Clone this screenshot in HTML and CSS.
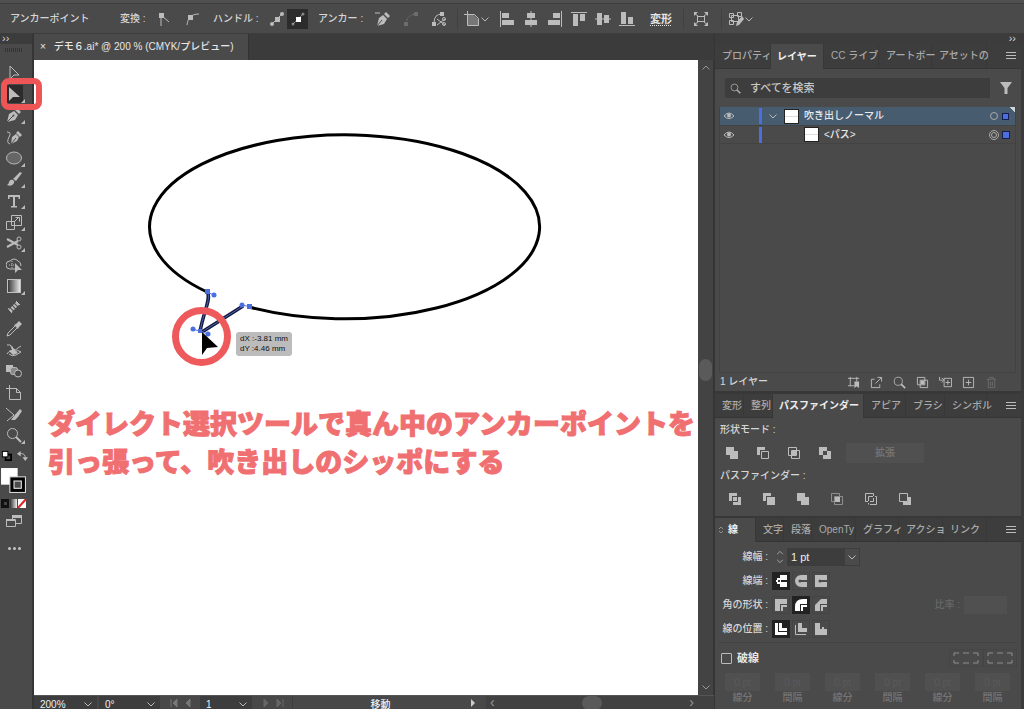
FILE: index.html
```html
<!DOCTYPE html>
<html lang="ja">
<head>
<meta charset="utf-8">
<meta name="viewport" content="width=device-width, initial-scale=1">
<title>デモ６.ai</title>
<link rel="stylesheet" href="styles.css">
</head>
<body>
<svg class="sprite" aria-hidden="true">
  <defs><linearGradient id="fade"><stop offset="0" stop-color="#333"/><stop offset="1" stop-color="#eee"/></linearGradient></defs>
  <symbol id="corner" viewBox="0 0 16 16"><path d="M5 3V15M5 4L13 11" class="ln"/><rect x="3" y="2" width="5" height="5" class="fl"/></symbol>
  <symbol id="smooth" viewBox="0 0 16 16"><path d="M3 14C4 7 7 3 15 3" class="ln"/><rect x="4" y="4" width="5" height="5" class="fl"/></symbol>
  <symbol id="handle" viewBox="0 0 16 16"><path d="M3 13L13 3" class="ln"/><circle cx="3" cy="13" r="2" class="fl"/><circle cx="13" cy="3" r="2" class="fl"/><rect x="6" y="6" width="5" height="5" class="fl"/></symbol>
  <symbol id="handle-on" viewBox="0 0 16 16"><path d="M3 13L13 3" class="ln dimmed"/><circle cx="3" cy="13" r="1.5" class="fl dimmed"/><circle cx="13" cy="3" r="1.5" class="fl dimmed"/><rect x="6" y="6" width="5" height="5" fill="#fff"/></symbol>
  <symbol id="pen" viewBox="0 0 16 16"><path d="M1 15L3 7L8 4L12 8L9 13ZM9 3L11 1L15 5L13 7Z" class="fl"/><path d="M1 15L7 9" stroke="#4a4a4a"/><circle cx="7.500" cy="8.500" r="1" fill="#4a4a4a"/></symbol>
  <symbol id="pen-minus" viewBox="0 0 16 16"><path d="M2 15L4 7L8 4L12 8L9 13ZM9 3L11 1L15 5L13 7Z" class="fl"/><path d="M2 15L7 9" stroke="#4a4a4a"/><path d="M0 2H5" class="ln"/></symbol>
  <symbol id="curve" viewBox="0 0 16 16"><path d="M3 14Q3 4 13 3" class="ln" stroke-dasharray="3 1"/><rect x="1" y="11" width="4" height="4" class="fl"/><rect x="11" y="1" width="4" height="4" class="fl"/></symbol>
  <symbol id="cut" viewBox="0 0 16 16"><path d="M3 12Q3 3 11 3M6 8L14 14M14 8L6 14" class="ln"/><rect x="1" y="11" width="4" height="4" class="fl"/><rect x="9" y="1" width="4" height="4" class="fl"/><circle cx="13" cy="13" r="1.500" class="ln"/><circle cx="13" cy="8" r="1.500" class="ln"/></symbol>
  <symbol id="artboard" viewBox="0 0 16 16"><path d="M0 3.500H4M3.500 0V14.500H14.500V7.500L10.500 3.500H3.500ZM10.500 3.500V7.500H14.500" class="ln"/></symbol>
  <symbol id="artboard-fill" viewBox="0 0 16 16"><path d="M4 4H10L14 8V14H4Z" fill="#777"/><path d="M0 3.500H4M3.500 0V14.500H14.500V7.500L10.500 3.500H3.500Z" class="ln"/></symbol>
  <symbol id="al" viewBox="0 0 16 16"><path d="M1.500 0V16" class="ln"/><path d="M3 2H10V7H3ZM3 9H15V14H3Z" class="fl"/></symbol>
  <symbol id="ac" viewBox="0 0 16 16"><path d="M8 0V16" class="ln"/><path d="M4 2H12V7H4ZM2 9H14V14H2Z" class="fl"/></symbol>
  <symbol id="ar" viewBox="0 0 16 16"><path d="M14.500 0V16" class="ln"/><path d="M6 2H13V7H6ZM1 9H13V14H1Z" class="fl"/></symbol>
  <symbol id="at" viewBox="0 0 16 16"><path d="M0 1.500H16" class="ln"/><path d="M2 3H7V15H2ZM9 3H14V10H9Z" class="fl"/></symbol>
  <symbol id="am" viewBox="0 0 16 16"><path d="M0 8H16" class="ln"/><path d="M2 2H7V14H2ZM9 4H14V12H9Z" class="fl"/></symbol>
  <symbol id="ab" viewBox="0 0 16 16"><path d="M0 14.500H16" class="ln"/><path d="M2 1H7V13H2ZM9 6H14V13H9Z" class="fl"/></symbol>
  <symbol id="isolate" viewBox="0 0 16 16"><rect x="4.500" y="5.500" width="7" height="5" class="ln"/><path d="M1 2L5 5M15 2L11 5M1 14L5 11M15 14L11 11" class="ln"/><path d="M1 1H5L1 5ZM15 1V5L11 1ZM1 15V11L5 15ZM15 15H11L15 11Z" class="fl"/></symbol>
  <symbol id="recolor" viewBox="0 0 16 16"><path d="M3.500 4.500H10.500V10.500H3.500ZM1.500 2.500H5.500V6.500H1.500ZM1.500 9.500H5.500V13.500H1.500ZM9.500 1.500H13.500V5.500H9.500Z" class="ln"/><path d="M8 15L9 11L14 5L16 8L11 14Z" class="fl"/></symbol>
  <symbol id="chev" viewBox="0 0 10 10"><path d="M1.500 3.500L5 7L8.500 3.500" class="ln"/></symbol>
  <symbol id="arrow" viewBox="0 0 16 16"><path d="M4 1V14L8 10H13Z" class="ln"/></symbol>
  <symbol id="arrow-fill" viewBox="0 0 16 16"><path d="M3 1V15L7 11H14Z" class="fl"/></symbol>
  <symbol id="curvature" viewBox="0 0 16 16"><path d="M5 15L6 8L10 5L13 8L11 12ZM10 4L12 2L16 6L14 8Z" class="fl"/><path d="M1 3Q6 3 3 8Q0 14 4 15" class="ln"/><path d="M5 15L10 9" stroke="#4a4a4a"/></symbol>
  <symbol id="oval" viewBox="0 0 16 16"><ellipse cx="8" cy="8" rx="7.500" ry="6" fill="#666" stroke="#b8b8b8"/></symbol>
  <symbol id="brush" viewBox="0 0 16 16"><path d="M7 8L14 1L16 2L10 10ZM1 14Q3 13 3 11Q4 8 7 9Q9 10 8 12Q6 16 1 14Z" class="fl"/></symbol>
  <symbol id="type" viewBox="0 0 16 16"><path d="M2 2H14V6H12.500V4H9V13H11V14.500H5V13H7V4H3.500V6H2Z" class="fl"/></symbol>
  <symbol id="scale" viewBox="0 0 16 16"><path d="M5.500 1.500H15.500V11.500H5.500ZM0.500 7.500H8.500V15.500H0.500ZM8 8L13 3M9.500 3.500H13.500V7.500" class="ln"/></symbol>
  <symbol id="scissors" viewBox="0 0 16 16"><path d="M1 4L12 10M1 12L12 6" stroke="#bcbcbc" stroke-width="2" fill="none"/><circle cx="13" cy="4" r="2" class="ln"/><circle cx="13" cy="12" r="2" class="ln"/></symbol>
  <symbol id="builder" viewBox="0 0 16 16"><path d="M9 12H4A4 4 0 0 1 4 4Q8 0 12 4Q15 5 15 9" class="ln"/><path d="M3 8H11M6 4V11" class="ln" stroke-dasharray="1 1"/><path d="M9 6V16L12 13H16Z" class="fl"/></symbol>
  <symbol id="gradient" viewBox="0 0 16 16"><rect x="1.500" y="1.500" width="13" height="13" fill="url(#fade)" stroke="#c0c0c0"/></symbol>
  <symbol id="measure" viewBox="0 0 16 16"><path d="M2 9L6 14M10 2L14 6" class="ln"/><path d="M4 12L12 4" stroke="#bcbcbc" stroke-width="4" stroke-dasharray="2 1"/></symbol>
  <symbol id="dropper" viewBox="0 0 16 16"><path d="M9 5L2 12L1 15L4 14L11 7" class="ln"/><path d="M8 4L10 3L13 0L16 3L13 6L12 8Z" class="fl"/></symbol>
  <symbol id="warp" viewBox="0 0 16 16"><path d="M1 3Q6 2 7 7Q10 9 12 6L15 4M1 12Q5 6 8 10Q12 7 15 10L10 13Q6 15 3 12" class="ln"/><path d="M4 3L9 8L12 11L7 13L3 9L6 8Z" class="fl"/></symbol>
  <symbol id="blend" viewBox="0 0 16 16"><rect x="0" y="2" width="7" height="7" class="fl"/><rect x="4.500" y="4.500" width="7" height="7" rx="2" fill="#888" stroke="#bbb"/><circle cx="12" cy="10.500" r="3.500" fill="#4a4a4a" stroke="#bcbcbc"/></symbol>
  <symbol id="slice" viewBox="0 0 16 16"><path d="M0 2L8 9L1 15" class="ln"/><path d="M8 10L14 3L16 5L12 11L9 14L5 14Z" class="fl"/></symbol>
  <symbol id="lens" viewBox="0 0 16 16"><circle cx="6.500" cy="6.500" r="5" class="ln"/><path d="M10 10L15 15" stroke="#bcbcbc" stroke-width="2"/></symbol>
  <symbol id="screens" viewBox="0 0 16 16"><path d="M0.500 6.500H9.500V13.500H0.500ZM6.500 6V2.500H15.500V10.500H9.500" class="ln"/><path d="M6 2H16V5H6ZM0 6H9V8H0Z" class="fl"/></symbol>
  <symbol id="swap" viewBox="0 0 12 12"><path d="M3 4H5Q9 4 9 9" class="ln"/><path d="M0 4L4 1V7ZM6 8H12L9 12Z" class="fl"/></symbol>
  <symbol id="eye" viewBox="0 0 12 12"><path d="M1 6Q6 0 11 6Q6 11 1 6Z" class="ln"/><circle cx="6" cy="5.500" r="2" class="fl"/></symbol>
  <symbol id="funnel" viewBox="0 0 12 12"><path d="M0 0H12L7.500 6V12H4.500V6Z" class="fl"/></symbol>
  <symbol id="menu" viewBox="0 0 10 10"><path d="M0 1.500H10M0 4.500H10M0 7.500H10" class="ln"/></symbol>
  <symbol id="locate" viewBox="0 0 14 14"><path d="M3.500 1V11M1 2.500H13M1 10.500H8M10.500 1V6" class="ln"/><path d="M8 6H13V13L10.500 11L8 13Z" class="fl"/></symbol>
  <symbol id="export" viewBox="0 0 14 14"><path d="M5 3.500H1.500V12.500H10.500V9M6 8L12 2M8 1.500H12.500V6" class="ln"/></symbol>
  <symbol id="mask" viewBox="0 0 14 14"><path d="M1.500 1.500H9.500V9.500H1.500ZM4.500 4.500H12.500V12.500H4.500Z" class="ln"/><path d="M5 5H9V9H5Z" class="fl"/></symbol>
  <symbol id="sublayer" viewBox="0 0 14 14"><path d="M0.500 1V4.500H4M3 2L5.500 4.500L3 7M5.500 2.500H13.500V11.500H5.500ZM7 7H12M9.500 4.500V9.500" class="ln"/></symbol>
  <symbol id="plus" viewBox="0 0 14 14"><path d="M1.500 1.500H12.500V12.500H1.500ZM4 7H10M7 4V10" class="ln"/></symbol>
  <symbol id="trash" viewBox="0 0 14 14"><path d="M2 3.500H12M5 3V1.500H9V3M3.500 4V12.500H10.500V4M6 6V11M8 6V11" class="ln"/></symbol>
  <symbol id="unite" viewBox="0 0 14 14"><path d="M1 1H9V5H13V13H5V9H1Z" class="fl"/></symbol>
  <symbol id="minusf" viewBox="0 0 14 14"><path d="M1 1H9V4H4V9H1Z" class="fl"/><path d="M5.500 5.500H12.500V12.500H5.500Z" class="ln"/></symbol>
  <symbol id="exclude" viewBox="0 0 14 14"><path d="M1 1H9V5H13V13H5V9H1ZM5 5V9H9V5Z" class="fl" fill-rule="evenodd"/></symbol>
  <symbol id="divide" viewBox="0 0 14 14"><path d="M1 1H9V4H4V9H1ZM10 5H13V13H5V10H10Z" class="fl"/><path d="M5 5H9V9H5Z" class="fl"/></symbol>
  <symbol id="trim" viewBox="0 0 14 14"><path d="M1 1H9V4H4V9H1ZM5 5H13V13H5Z" class="fl"/></symbol>
  <symbol id="merge" viewBox="0 0 14 14"><path d="M1 1H9V5H13V13H5V9H1Z" class="fl"/></symbol>
  <symbol id="crop" viewBox="0 0 14 14"><path d="M4 9.500H1.500V1.500H9.500V4" class="ln dimmed"/><path d="M4.500 4.500H12.500V12.500H4.500Z" class="ln dimmed"/><path d="M5 5H10V10H5Z" class="fl"/></symbol>
  <symbol id="outline" viewBox="0 0 14 14"><path d="M1.500 1.500H9.500V4M4 9.500H1.500V1.500M4.500 9V4.500H9M9.500 6V9.500H6M6 12.500H12.500V4.500H11M4.500 11V12.500" class="ln"/></symbol>
  <symbol id="minusb" viewBox="0 0 14 14"><path d="M1.500 1.500H9.500V9.500H1.500Z" class="ln"/><path d="M10 5H13V13H5V10H10Z" class="fl"/></symbol>
  <symbol id="cap1" viewBox="0 0 14 14"><path d="M6 1H13V6H7V8H13V13H6V10H3V8H2V6H3V4H6Z" class="fl"/><path d="M4 6H6V8H4Z" fill="#222"/></symbol>
  <symbol id="cap2" viewBox="0 0 14 14"><path d="M13 1H7A6 6 0 0 0 7 13H13V8H7V6H13Z" class="fl"/><circle cx="6" cy="7" r="1.500" fill="#4a4a4a"/></symbol>
  <symbol id="cap3" viewBox="0 0 14 14"><path d="M1 1H13V6H7V8H13V13H1Z" class="fl"/><circle cx="6" cy="7" r="1.500" fill="#4a4a4a"/></symbol>
  <symbol id="join1" viewBox="0 0 14 14"><path d="M1 1H13V6H6V13H1ZM7 7H13V9H9V13H7Z" class="fl"/></symbol>
  <symbol id="join2" viewBox="0 0 14 14"><path d="M1 13V9Q1 1 9 1H13V6H6V13ZM7 7H13V9H9V13H7Z" class="fl"/></symbol>
  <symbol id="join3" viewBox="0 0 14 14"><path d="M1 13V7L7 1H13V6H6V13ZM7 7H13V9H9V13H7Z" class="fl"/></symbol>
  <symbol id="pos1" viewBox="0 0 14 14"><path d="M1 1H4V10H13V13H1ZM5 1H8V6H13V9H5Z" class="fl"/></symbol>
  <symbol id="pos2" viewBox="0 0 14 14"><path d="M1.500 3V12.500H12" class="ln"/><path d="M4 1H8V6H13V10H4Z" class="fl"/></symbol>
  <symbol id="pos3" viewBox="0 0 14 14"><path d="M1 1H6V7H8V5H10V7H13V13H1Z" class="fl"/></symbol>
  <symbol id="dash" viewBox="0 0 26 12"><path d="M1 4V1H6M10 1H16M20 1H25V4M1 8V11H6M10 11H16M20 11H25V8" class="ln"/></symbol>
</svg>

<div class="app">
  <header class="control-bar">
    <span class="mode">アンカーポイント</span>
    <span class="bar-label">変換 :</span>
    <button class="ib" aria-label="コーナーに変換"><svg><use href="#corner"/></svg></button>
    <button class="ib" aria-label="スムーズに変換"><svg><use href="#smooth"/></svg></button>
    <span class="bar-label wide">ハンドル :</span>
    <button class="ib small" aria-label="ハンドルを表示"><svg><use href="#handle"/></svg></button>
    <button class="ib small on" aria-label="ハンドルを隠す"><svg><use href="#handle-on"/></svg></button>
    <span class="bar-label anchor">アンカー :</span>
    <button class="ib" aria-label="アンカーを削除"><svg><use href="#pen-minus"/></svg></button>
    <button class="ib faint" aria-label="連結"><svg><use href="#curve"/></svg></button>
    <button class="ib" aria-label="パスをカット"><svg><use href="#cut"/></svg></button>
    <button class="ib split rule" aria-label="整列の基準"><svg><use href="#artboard-fill"/></svg><svg class="chev"><use href="#chev"/></svg></button>
    <div class="aligns">
      <button class="ib" aria-label="左揃え"><svg><use href="#al"/></svg></button>
      <button class="ib" aria-label="左右中央"><svg><use href="#ac"/></svg></button>
      <button class="ib" aria-label="右揃え"><svg><use href="#ar"/></svg></button>
      <button class="ib" aria-label="上揃え"><svg><use href="#at"/></svg></button>
      <button class="ib" aria-label="上下中央"><svg><use href="#am"/></svg></button>
      <button class="ib" aria-label="下揃え"><svg><use href="#ab"/></svg></button>
    </div>
    <button class="transform">変形</button>
    <button class="ib rule" aria-label="編集モード"><svg><use href="#isolate"/></svg></button>
    <button class="ib split rule" aria-label="類似選択"><svg><use href="#recolor"/></svg><svg class="chev"><use href="#chev"/></svg></button>
  </header>

  <aside class="toolbar">
    <div class="expand">››</div>
    <div class="grip"></div>
    <div class="tools">
      <button class="tool" aria-label="選択"><svg><use href="#arrow"/></svg></button>
      <button class="tool on more" aria-label="ダイレクト選択"><svg><use href="#arrow-fill"/></svg><span class="marker"></span></button>
      <button class="tool more" aria-label="ペン"><svg><use href="#pen"/></svg></button>
      <button class="tool" aria-label="曲線"><svg><use href="#curvature"/></svg></button>
      <button class="tool more" aria-label="楕円形"><svg><use href="#oval"/></svg></button>
      <button class="tool more" aria-label="ブラシ"><svg><use href="#brush"/></svg></button>
      <button class="tool more" aria-label="文字"><svg><use href="#type"/></svg></button>
      <button class="tool more" aria-label="拡大・縮小"><svg><use href="#scale"/></svg></button>
      <button class="tool more" aria-label="はさみ"><svg><use href="#scissors"/></svg></button>
      <button class="tool" aria-label="シェイプ形成"><svg><use href="#builder"/></svg></button>
      <button class="tool more" aria-label="グラデーション"><svg><use href="#gradient"/></svg></button>
      <button class="tool" aria-label="ものさし"><svg><use href="#measure"/></svg></button>
      <button class="tool" aria-label="スポイト"><svg><use href="#dropper"/></svg></button>
      <button class="tool" aria-label="パペットワープ"><svg><use href="#warp"/></svg></button>
      <button class="tool" aria-label="ブレンド"><svg><use href="#blend"/></svg></button>
      <button class="tool" aria-label="アートボード"><svg><use href="#artboard"/></svg></button>
      <button class="tool" aria-label="スライス"><svg><use href="#slice"/></svg></button>
      <button class="tool more" aria-label="ズーム"><svg><use href="#lens"/></svg></button>
    </div>
    <div class="defaults"><button class="mini" aria-label="初期設定の塗りと線"><svg viewBox="0 0 12 12"><rect x="5" y="5" width="6" height="6" fill="none" stroke="#000" stroke-width="2"/><rect x="1.500" y="1.500" width="6" height="6" fill="#fff" stroke="#000"/></svg></button><button class="mini" aria-label="塗りと線を入れ替え"><svg><use href="#swap"/></svg></button></div>
    <button class="paint" aria-label="塗りと線"><svg viewBox="0 0 26 26"><rect x="1" y="1" width="16" height="16" fill="#fff"/><rect x="9.500" y="9.500" width="15" height="15" fill="#000" stroke="#ddd"/><rect x="13.500" y="13.500" width="7" height="7" fill="#4a4a4a" stroke="#eee"/></svg></button>
    <button class="paint-mode" aria-label="カラーモード"><svg viewBox="0 0 26 9"><rect width="8" height="9" fill="#111"/><rect x="3" y="3" width="3" height="3" fill="#444"/><rect x="9" width="7" height="9" fill="url(#fade)"/><rect x="17" width="8" height="9" fill="#fff"/><path d="M17 9L25 0" stroke="#d22" stroke-width="2"/></svg></button>
    <button class="tool screen" aria-label="スクリーンモード"><svg><use href="#screens"/></svg></button>
    <button class="dots" aria-label="ツールバーを編集"><i></i><i></i><i></i></button>
  </aside>

  <main class="document">
    <div class="doc-tabs"><button class="doc-tab"><span>×</span>デモ６.ai* @ 200 % (CMYK/プレビュー)</button></div>
    <div class="canvas">
      <div class="art">
        <svg class="drawing" viewBox="0 0 664 325" role="img" aria-label="吹き出しの楕円">
          <path d="M173 232A195 92 0 1 1 215 247" fill="none" stroke="#000" stroke-width="3"/>
          <path d="M173 232C178 237 169 253 166 272M168 272L209 246" fill="none" stroke="#151a3c" stroke-width="3.500"/>
          <path d="M173 232C178 237 169 253 166 272M168 272L209 246" fill="none" stroke="#4a63b8" stroke-width="1"/>
          <path d="M173 232L180 235M208 245L217 247M159 269L174 274" stroke="#5577dd"/>
          <g fill="#4c6fe0"><circle cx="180" cy="235" r="2.500"/><circle cx="208" cy="245" r="2.500"/><circle cx="159" cy="269" r="2.500"/><circle cx="174" cy="274" r="2.500"/><rect x="171" y="229" width="5" height="5"/><rect x="213" y="244" width="5" height="5"/><rect x="164" y="269" width="4" height="4"/></g>
          <circle cx="167.500" cy="276.500" r="26" fill="none" stroke="#ee5a5c" stroke-width="7"/>
          <path d="M168 272V295L173 288L184 287Z" fill="#000"/>
        </svg>
        <div class="tip">dX :-3.81 mm<br>dY :4.46 mm</div>
      </div>
      <p class="caption">ダイレクト選択ツールで真ん中のアンカーポイントを<br>引っ張って、吹き出しのシッポにする</p>
    </div>
    <div class="vscroll"><span class="up"><svg><use href="#chev"/></svg></span><i></i><span><svg><use href="#chev"/></svg></span></div>
    <footer class="status">
      <button class="st zoom">200%<svg><use href="#chev"/></svg></button>
      <button class="st rot">0°<svg><use href="#chev"/></svg></button>
      <span class="nav"><svg viewBox="0 0 22 8"><path d="M1 0V8M7 0V8L3 4ZM20 0V8L16 4Z" fill="#777" stroke="#777"/></svg></span>
      <button class="st page">1<svg><use href="#chev"/></svg></button>
      <span class="nav"><svg viewBox="0 0 22 8"><path d="M2 0V8L6 4ZM15 0V8L19 4ZM21 0V8" fill="#666" stroke="#666"/></svg></span>
      <span class="action">移動</span>
      <span class="play"><svg viewBox="0 0 6 8"><path d="M1 0V8L5 4Z" fill="#ccc"/></svg></span>
      <span class="hscroll"><b>‹</b><i></i><b>›</b></span>
    </footer>
  </main>

  <aside class="panels">
    <div class="expand right">››</div>
    <section class="panel layers">
      <nav class="tabs one"><button>プロパティ</button><button class="on">レイヤー</button><button>CC ライブ</button><button>アートボー</button><button>アセットの</button><button class="menu" aria-label="メニュー"><svg><use href="#menu"/></svg></button></nav>
      <div class="search"><label for="q"><svg><use href="#lens"/></svg></label><input id="q" type="text" placeholder="すべてを検索"><button aria-label="フィルター"><svg><use href="#funnel"/></svg></button></div>
      <div class="list">
        <div class="row on"><svg class="eye"><use href="#eye"/></svg><i class="bar"></i><svg class="chev"><use href="#chev"/></svg><span class="thumb"></span><span class="name">吹き出しノーマル</span><i class="target"></i><i class="sel"></i></div>
        <div class="row child"><svg class="eye"><use href="#eye"/></svg><i class="bar"></i><span class="thumb"></span><span class="name">&lt;パス&gt;</span><i class="target double"></i><i class="sel big"></i></div>
      </div>
      <div class="layer-foot"><span>1 レイヤー</span>
        <button aria-label="探す"><svg><use href="#locate"/></svg></button><button aria-label="書き出し"><svg><use href="#export"/></svg></button><button aria-label="検索"><svg><use href="#lens"/></svg></button><button aria-label="マスク"><svg><use href="#mask"/></svg></button><button aria-label="サブレイヤー"><svg><use href="#sublayer"/></svg></button><button aria-label="新規レイヤー"><svg><use href="#plus"/></svg></button><button class="faint" aria-label="削除"><svg><use href="#trash"/></svg></button></div>
    </section>

    <section class="panel finder">
      <nav class="tabs two"><button>変形</button><button>整列</button><button class="on">パスファインダー</button><button>アピア</button><button>ブラシ</button><button>シンボル</button><button class="menu" aria-label="メニュー"><svg><use href="#menu"/></svg></button></nav>
      <div class="finder-body">
        <h2>形状モード :</h2>
        <div class="shapes"><button aria-label="合体"><svg><use href="#unite"/></svg></button><button aria-label="前面型抜き"><svg><use href="#minusf"/></svg></button><button aria-label="交差"><svg><use href="#mask"/></svg></button><button aria-label="中マド"><svg><use href="#exclude"/></svg></button><button class="expand-shape" disabled>拡張</button></div>
        <h2>パスファインダー :</h2>
        <div class="shapes paths"><button aria-label="分割"><svg><use href="#divide"/></svg></button><button aria-label="刈り込み"><svg><use href="#trim"/></svg></button><button aria-label="合流"><svg><use href="#merge"/></svg></button><button aria-label="切り抜き"><svg><use href="#crop"/></svg></button><button aria-label="アウトライン"><svg><use href="#outline"/></svg></button><button aria-label="背面型抜き"><svg><use href="#minusb"/></svg></button></div>
      </div>
    </section>

    <section class="panel stroke">
      <nav class="tabs three"><button class="on"><svg class="sort" viewBox="0 0 6 10"><path d="M1 4L3 2L5 4M1 6L3 8L5 6" class="ln dimmed"/></svg>線</button><button>文字</button><button>段落</button><button>OpenTy</button><button>グラフィ</button><button>アクショ</button><button>リンク</button><button class="menu" aria-label="メニュー"><svg><use href="#menu"/></svg></button></nav>
      <div class="stroke-body">
        <div class="field"><label for="w">線幅 :</label><button class="step" aria-label="増減"><svg class="flip"><use href="#chev"/></svg><svg><use href="#chev"/></svg></button><input id="w" type="text" value="1 pt"><button class="drop" aria-label="線幅を選択"><svg><use href="#chev"/></svg></button></div>
        <div class="field"><span>線端 :</span><button class="opt on" aria-label="線端なし"><svg><use href="#cap1"/></svg></button><button class="opt" aria-label="丸型線端"><svg><use href="#cap2"/></svg></button><button class="opt" aria-label="突出線端"><svg><use href="#cap3"/></svg></button></div>
        <div class="field"><span>角の形状 :</span><button class="opt" aria-label="マイター"><svg><use href="#join1"/></svg></button><button class="opt on" aria-label="ラウンド"><svg><use href="#join2"/></svg></button><button class="opt" aria-label="ベベル"><svg><use href="#join3"/></svg></button><label class="ratio" for="r">比率 :</label><input id="r" class="ratio-in" type="text" disabled></div>
        <div class="field"><span>線の位置 :</span><button class="opt on" aria-label="中央"><svg><use href="#pos1"/></svg></button><button class="opt" aria-label="内側"><svg><use href="#pos2"/></svg></button><button class="opt" aria-label="外側"><svg><use href="#pos3"/></svg></button></div>
        <div class="dash-head"><label><input type="checkbox">破線</label><button disabled aria-label="正確な長さ"><svg><use href="#dash"/></svg></button><button disabled aria-label="先端に整列"><svg><use href="#dash"/></svg></button></div>
        <div class="dashes">
          <label><input type="text" value="0 pt" disabled>線分</label><label><input type="text" value="0 pt" disabled>間隔</label><label><input type="text" value="0 pt" disabled>線分</label><label><input type="text" value="0 pt" disabled>間隔</label><label><input type="text" value="0 pt" disabled>線分</label><label><input type="text" value="0 pt" disabled>間隔</label>
        </div>
      </div>
    </section>
  </aside>
</div>
</body>
</html>
```
FILE: styles.css
```css
* { box-sizing: border-box; }
html, body { height: 100%; }
body {
  margin: 0;
  overflow: hidden;
  background: #4a4a4a;
  color: #d6d6d6;
  font: 500 10px/14px "Liberation Sans", "Noto Sans CJK JP", sans-serif;
}
button, input { font: inherit; color: inherit; border: 0; background: none; padding: 0; margin: 0; }
button { display: flex; align-items: center; justify-content: center; white-space: nowrap; }
svg { display: block; flex: none; }
.sprite { position: absolute; width: 0; height: 0; }
.ln { fill: none; stroke: #bcbcbc; }
.fl { fill: #bcbcbc; }
.dimmed { opacity: .6; }
.faint { opacity: .3; }

.app {
  height: 100vh;
  display: grid;
  grid-template-columns: 34px minmax(0, 1fr) 310px;
  grid-template-rows: 34px minmax(0, 1fr);
}

/* control bar */
.control-bar {
  grid-column: 1 / -1;
  display: flex;
  align-items: center;
  padding: 1px 0 0 10px;
  background: #4a4a4a;
  border-top: 3px solid #505050;
  border-bottom: 1px solid #3c3c3c;
  box-shadow: inset 0 1px #3c3c3c;
}
.mode { width: 110px; }
.bar-label { width: 30px; white-space: nowrap; }
.bar-label.wide { width: 60px; padding-left: 7px; }
.bar-label.anchor { width: 61px; padding-left: 10px; }
.ib { width: 28px; height: 20px; }
.ib svg { width: 16px; height: 16px; }
.ib.small { width: 21px; }
.ib.on { background: #2c2c2c; }
.ib.split { width: 38px; }
.chev, .ib .chev { width: 10px; height: 10px; }
.rule { border-left: 1px solid #414141; margin-left: 4px; }
.aligns { display: flex; }
.aligns .ib { width: 24px; }
.transform { width: 28px; margin: 0 4px 0 8px; font-size: 11px; font-weight: 700; color: #e4e4e4; text-decoration: underline dotted; text-underline-offset: 2px; }
.transform + .rule { width: 34px; }

/* tools */
.toolbar { display: flex; flex-direction: column; background: #4a4a4a; border-right: 2px solid #353535; position: relative; z-index: 1; padding-right: 4px; }
.expand { height: 10px; margin-right: -4px; padding-left: 2px; background: #3c3c3c; line-height: 9px; font-size: 11px; }
.grip { height: 4px; width: 18px; margin: 4px 0 10px 5px; background: repeating-linear-gradient(90deg, #353535 0 1px, transparent 1px 2px); }
.tools { display: grid; grid-auto-rows: 1fr; height: 384px; }
.tool { position: relative; }
.tool svg { width: 16px; height: 16px; }
.tool.on { background: linear-gradient(#2c2c2c, #2c2c2c) center / 18px 18px no-repeat; }
.tool.on .fl { fill: #eee; }
.more::after { content: ""; position: absolute; right: 3px; bottom: 2px; border: 2px solid; border-color: transparent #bbb #bbb transparent; }
.marker { position: absolute; z-index: 2; left: 1px; top: -5px; width: 41px; height: 32px; border: 6px solid #ee5556; border-radius: 8px; }
.defaults { display: flex; justify-content: space-between; padding: 4px 0 0 1px; }
.mini svg { width: 11px; height: 11px; }
.paint { justify-content: flex-start; margin-top: 6px; }
.paint svg { width: 27px; height: 27px; }
.paint-mode { margin-top: 5px; }
.paint-mode svg { width: 26px; height: 9px; }
.screen { margin-top: 5px; }
.dots { margin-top: 18px; gap: 2px; }
.dots i { width: 3px; height: 3px; border-radius: 50%; background: #c4c4c4; }

/* document */
.document { display: grid; grid-template-columns: minmax(0, 1fr) 16px; grid-template-rows: 26px minmax(0, 1fr) 14px; background: #4a4a4a; }
.doc-tabs { grid-column: 1 / -1; display: flex; background: #3b3b3b; }
.doc-tab { background: #4a4a4a; width: 215px; padding-left: 6px; justify-content: flex-start; gap: 8px; color: #e8e8e8; border-right: 1px solid #333; }
.canvas { background: #fff; overflow: hidden; }
.art { position: relative; height: 344px; }
.drawing { width: 664px; height: 325px; }
.tip { position: absolute; left: 202px; top: 272px; width: 56px; padding: 2px 4px; border-radius: 3px; background: #bcbcbc; color: #111; font-size: 8px; line-height: 10px; white-space: nowrap; }
.caption { margin: 0; padding-left: 14px; color: #f07072; font: 900 27px/38px "Noto Sans CJK JP", sans-serif; white-space: nowrap; -webkit-text-stroke: 1px #f07072; }
.vscroll { display: flex; flex-direction: column; justify-content: space-between; align-items: center; background: #434343; border-right: 1px solid #353535; padding: 3px 0; }
.vscroll svg { width: 10px; height: 10px; opacity: .7; }
.up, .flip { transform: rotate(180deg); }
.vscroll i { width: 13px; height: 22px; margin-bottom: 16px; border-radius: 7px; background: #5a5a5a; }
.status { grid-column: 1 / -1; display: flex; align-items: stretch; overflow: hidden; background: #484848; line-height: 18px; color: #eee; height: 14px; border-top: 1px solid #555; }
.status svg { width: 10px; height: 10px; margin-top: 3px; }
.st { justify-content: space-between; align-items: flex-start; padding: 0 4px 0 6px; background: #3d3d3d; margin-right: 2px; }
.zoom { width: 63px; }
.rot { width: 61px; }
.page { width: 52px; }
.nav { width: 38px; padding-left: 6px; }
.status .nav svg { width: 26px; height: 8px; }
.action { flex: 1; text-align: center; border-left: 1px solid #3d3d3d; }
.play { width: 18px; }
.play svg { height: 8px; }
.hscroll { width: 228px; display: flex; justify-content: space-between; padding: 0 20px 0 4px; background: #414141; line-height: 12px; font-size: 14px; }
.hscroll b { font-weight: 400; color: #999; }
.hscroll i { width: 20px; height: 14px; border-radius: 7px; background: #5a5a5a; }

/* panels */
.panels { display: flex; flex-direction: column; background: #4a4a4a; border-left: 1px solid #353535; border-right: 3px solid #3b3b3b; min-height: 0; }
.right { text-align: right; margin: 0; padding-right: 5px; flex: none; }
.tabs { display: grid; height: 24px; background: #3d3d3d; border-bottom: 1px solid #353535; }
.tabs.one { grid-template-columns: 56px 53px 55px 53px 55px 1fr; height: 25px; }
.tabs.two { grid-template-columns: 29px 29px 91px 42px 39px 42px 1fr; }
.tabs.three { grid-template-columns: 41px 28px 28px 44px 43px 44px 44px 1fr; }
.tabs button { justify-content: flex-start; padding-left: 7px; color: #aaa; box-shadow: inset -1px 0 #383838; }
.tabs .on { background: #4a4a4a; color: #eee; font-weight: 700; padding-left: 6px; margin-bottom: -1px; }
.tabs .menu { justify-content: flex-end; padding-right: 5px; box-shadow: none; }
.menu svg { width: 10px; height: 10px; }
.tabs .sort { width: 6px; height: 10px; margin: 0 4px 0 -3px; }
.layers { flex: 1 0 347px; display: flex; flex-direction: column; max-height: 350px; border-bottom: 3px solid #383838; }
.search { display: flex; align-items: center; margin: 9px 8px 9px 10px; height: 20px; }
.search label { display: flex; align-items: center; height: 20px; padding: 0 9px 0 5px; background: #3d3d3d; border-radius: 2px 0 0 2px; }
.search label svg { width: 11px; height: 11px; }
.search input { flex: 1; min-width: 0; height: 20px; background: #3d3d3d; font-size: 11px; }
.search input::placeholder { color: #c8c8c8; opacity: 1; }
.search button { width: 14px; margin-left: 9px; }
.search button svg { width: 12px; height: 12px; }
.list { flex: 1; margin: 0 5px 0 4px; border: 1px solid #424242; border-top: 0; }
.row { display: flex; align-items: center; height: 18px; padding-left: 3px; padding-right: 6px; border-bottom: 1px solid #434343; }
.row.on { height: 19px; background: linear-gradient(225deg, #ccd4dc 4px, #485c70 4px); }
.eye { width: 12px; height: 12px; margin-right: 24px; }
.bar { width: 3px; height: 16px; background: #4b6fe0; margin-right: 6px; }
.row .chev { margin-right: 6px; }
.child .thumb { margin-left: 36px; }
.thumb { width: 15px; height: 15px; border: 1px solid #222; background: linear-gradient(#fff 45%, #ddd 46% 52%, #fff 53%); margin-right: 5px; }
.name { flex: 1; color: #e8e8e8; }
.target { width: 8px; height: 8px; border: 1px solid #aaa; border-radius: 50%; margin-right: 5px; }
.double { width: 10px; height: 10px; border: 3px double #aaa; margin-right: 4px; }
.sel { width: 5px; height: 5px; margin-right: 1px; background: #4b6fe0; outline: 1px solid #161e50; }
.sel.big { width: 6px; height: 6px; margin-right: 0; }
.layer-foot { display: flex; align-items: center; height: 18px; padding: 0 18px 0 5px; }
.layer-foot span { flex: 1; }
.layer-foot button { width: 23px; }
.layer-foot svg { width: 13px; height: 13px; }
.finder { border-bottom: 2px solid #383838; flex: none; }
.finder-body { padding: 5px 4px 7px 5px; }
h2 { margin: 0; font: inherit; }
.shapes { display: flex; height: 20px; margin: 6px 0; }
.shapes button { width: 31px; padding-right: 8px; }
.shapes svg { width: 14px; height: 14px; }
.shapes .expand-shape { width: 78px; padding: 0; margin-left: 2px; background: #505050; color: #777; }
.shapes.paths { margin-bottom: 0; padding-left: 3px; }
.paths button { width: 32px; margin-right: 2px; }
.stroke { flex: none; }
.stroke-body { padding: 3px 4px 0 4px; }
.field { display: flex; align-items: center; height: 24px; }
.field > span, .field > label:first-child { width: 49px; text-align: right; margin-right: 4px; white-space: nowrap; }
.field .step { flex-direction: column; width: 15px; }
.field .step svg { width: 10px; height: 8px; }
.field #w { width: 57px; height: 18px; padding-left: 4px; background: #3d3d3d; font-size: 11px; color: #eee; }
.drop { width: 16px; height: 18px; border: 1px solid #3d3d3d; }
.drop svg { width: 10px; height: 10px; }
.opt { width: 18px; height: 18px; margin-right: 2px; border: 1px solid #444; }
.opt.on { background: #222; border-color: #222; }
.opt svg { width: 14px; height: 14px; }
.opt.on svg { filter: brightness(1.35); }
.field .ratio { margin-left: auto; color: #686868; }
.field .ratio-in { width: 43px; height: 18px; margin: 0 10px 0 4px; background: #505050; }
.dash-head { display: flex; align-items: center; height: 31px; border-top: 1px solid #434343; margin-top: 1px; }
.dash-head label { display: flex; align-items: center; gap: 5px; flex: 1; font-size: 11px; font-weight: 700; color: #e8e8e8; }
.dash-head input { appearance: none; width: 11px; height: 11px; margin-left: 2px; border: 1px solid #bbb; border-radius: 1px; }
.dash-head button { width: 34px; height: 18px; border: 1px solid #434343; opacity: .6; }
.dash-head svg { width: 26px; height: 12px; }
.dashes { display: flex; gap: 15px; padding-left: 6px; color: #747474; }
.dashes label { display: flex; flex-direction: column; align-items: center; }
.dashes input { width: 35px; height: 18px; background: #505050; color: #5a5a5a; text-align: center; }
```
